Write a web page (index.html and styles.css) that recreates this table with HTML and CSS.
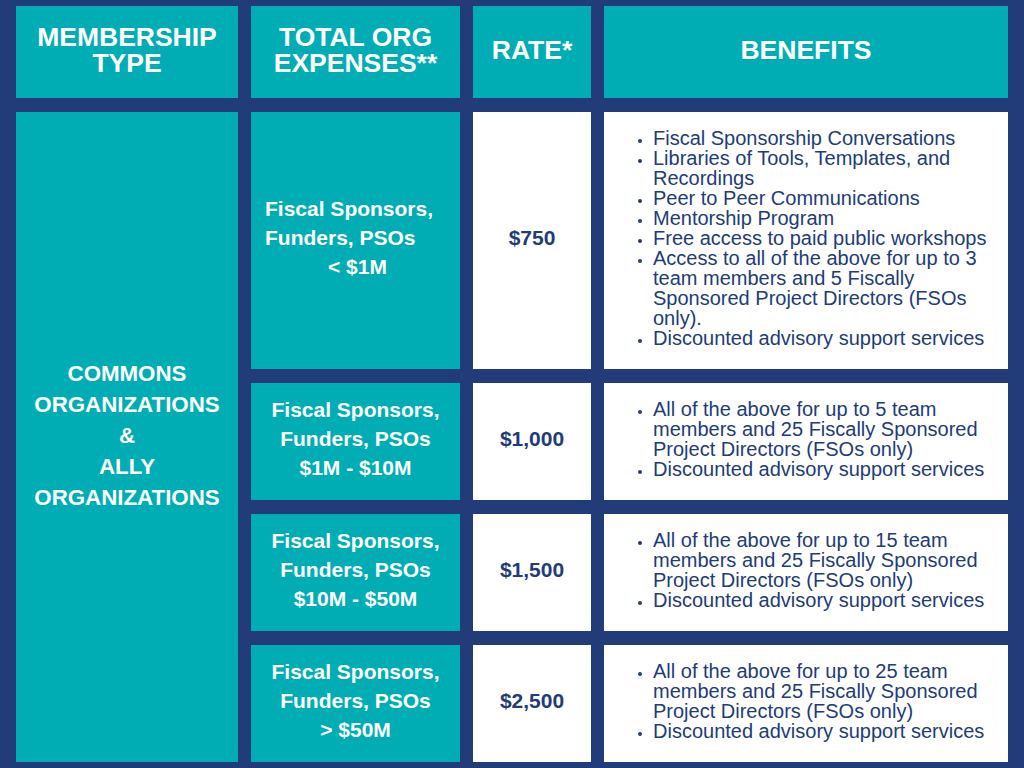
FILE: index.html
```html
<!DOCTYPE html>
<html lang="en">
<head>
<meta charset="utf-8">
<title>Membership Rates</title>
<link rel="stylesheet" href="styles.css">
</head>
<body>
<div class="table">
  <div class="cell head"><span class="hl">MEMBERSHIP</span><span class="hl">TYPE</span></div>
  <div class="cell head"><span class="hl">TOTAL ORG</span><span class="hl">EXPENSES**</span></div>
  <div class="cell head"><span class="hl">RATE*</span></div>
  <div class="cell head"><span class="hl">BENEFITS</span></div>

  <div class="cell type">COMMONS<br>ORGANIZATIONS<br>&amp;<br>ALLY<br>ORGANIZATIONS</div>

  <div class="cell tier tier-left">Fiscal Sponsors,<br>Funders, PSOs<br><span class="indent">&lt; $1M</span></div>
  <div class="cell rate">$750</div>
  <div class="cell benefits">
    <ul>
      <li>Fiscal Sponsorship Conversations</li>
      <li>Libraries of Tools, Templates, and Recordings</li>
      <li>Peer to Peer Communications</li>
      <li>Mentorship Program</li>
      <li>Free access to paid public workshops</li>
      <li>Access to all of the above for up to 3 team members and 5 Fiscally Sponsored Project Directors (FSOs only).</li>
      <li>Discounted advisory support services</li>
    </ul>
  </div>

  <div class="cell tier">Fiscal Sponsors,<br>Funders, PSOs<br>$1M - $10M</div>
  <div class="cell rate">$1,000</div>
  <div class="cell benefits">
    <ul>
      <li>All of the above for up to 5 team members and 25 Fiscally Sponsored Project Directors (FSOs only)</li>
      <li>Discounted advisory support services</li>
    </ul>
  </div>

  <div class="cell tier">Fiscal Sponsors,<br>Funders, PSOs<br>$10M - $50M</div>
  <div class="cell rate">$1,500</div>
  <div class="cell benefits">
    <ul>
      <li>All of the above for up to 15 team members and 25 Fiscally Sponsored Project Directors (FSOs only)</li>
      <li>Discounted advisory support services</li>
    </ul>
  </div>

  <div class="cell tier">Fiscal Sponsors,<br>Funders, PSOs<br>&gt; $50M</div>
  <div class="cell rate">$2,500</div>
  <div class="cell benefits">
    <ul>
      <li>All of the above for up to 25 team members and 25 Fiscally Sponsored Project Directors (FSOs only)</li>
      <li>Discounted advisory support services</li>
    </ul>
  </div>
</div>
</body>
</html>
```
FILE: styles.css
```css
html, body {
  margin: 0;
  padding: 0;
}
body {
  width: 1024px;
  height: 768px;
  background: #213c79;
  font-family: "Liberation Sans", Arial, sans-serif;
  overflow: hidden;
}
.table {
  box-sizing: border-box;
  width: 1024px;
  height: 768px;
  padding: 6px 16px;
  display: grid;
  grid-template-columns: 222px 209px 118px 404px;
  grid-template-rows: 92px 257px 117px 117px 117px;
  column-gap: 13px;
  row-gap: 14px;
}
.cell {
  box-sizing: border-box;
  display: flex;
  flex-direction: column;
  justify-content: center;
  align-items: center;
  text-align: center;
  padding-bottom: 6px;
}
.head {
  background: #00adb5;
  color: #ffffff;
  font-weight: bold;
  font-size: 26.5px;
  line-height: 26px;
  padding-bottom: 4px;
}
.hl {
  display: block;
  height: 26px;
}
.type {
  grid-row: 2 / 6;
  grid-column: 1;
  background: #00adb5;
  color: #ffffff;
  font-weight: bold;
  font-size: 22.3px;
  line-height: 31px;
  padding-bottom: 4px;
}
.tier {
  background: #00adb5;
  color: #ffffff;
  font-weight: bold;
  font-size: 21px;
  line-height: 29px;
}
.tier-left {
  align-items: flex-start;
  text-align: left;
  padding-left: 14px;
}
.indent {
  padding-left: 63px;
}
.rate {
  background: #ffffff;
  color: #213c79;
  font-weight: bold;
  font-size: 21px;
  line-height: 29px;
}
.benefits {
  background: #ffffff;
  color: #213c79;
  align-items: stretch;
  text-align: left;
  font-size: 20px;
  line-height: 20px;
  padding: 0 10px 5px 49px;
}
.benefits ul {
  list-style: none;
  margin: 0;
  padding: 0;
}
.benefits li {
  position: relative;
}
.benefits li::before {
  content: "";
  position: absolute;
  left: -15px;
  top: 11px;
  width: 4px;
  height: 4px;
  border-radius: 50%;
  background: #213c79;
}
```
